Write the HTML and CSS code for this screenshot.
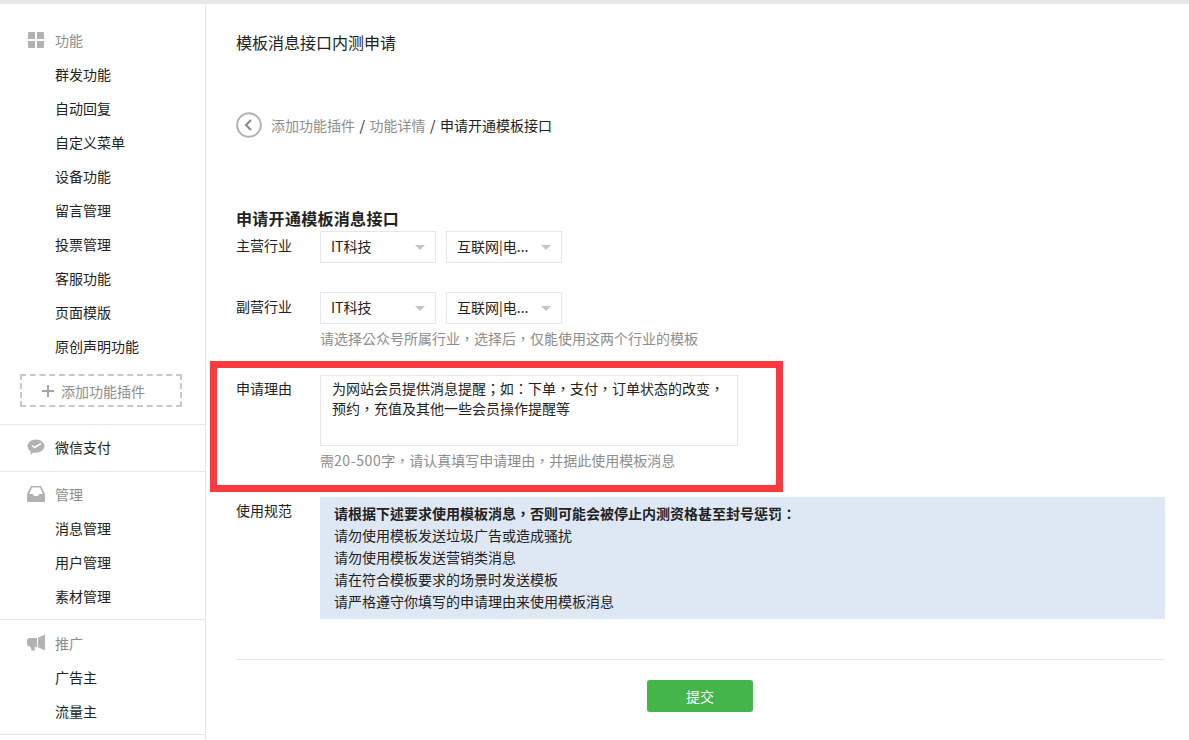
FILE: index.html
```html
<!DOCTYPE html>
<html lang="zh">
<head>
<meta charset="utf-8">
<title>模板消息接口内测申请</title>
<link rel="stylesheet" href="styles.css">
</head>
<body>
<div class="topbar"></div>
<div class="layout">
  <aside class="sidebar">
    <section class="group group-first">
      <div class="group-title">
        <svg class="gicon" viewBox="0 0 18 18"><path fill="#b2b2b2" d="M1 1h7v7H1zM10 1h7v7h-7zM1 10h7v7H1zM10 10h7v7h-7z"/></svg>
        <span>功能</span>
      </div>
      <a class="item">群发功能</a>
      <a class="item">自动回复</a>
      <a class="item">自定义菜单</a>
      <a class="item">设备功能</a>
      <a class="item">留言管理</a>
      <a class="item">投票管理</a>
      <a class="item">客服功能</a>
      <a class="item">页面模版</a>
      <a class="item">原创声明功能</a>
      <div class="add-plugin">
        <svg class="plus" viewBox="0 0 12 12"><path fill="#a3a3a3" d="M5 0h2v5h5v2H7v5H5V7H0V5h5z"/></svg>
        <span>添加功能插件</span>
      </div>
    </section>
    <section class="group group-pay">
      <div class="group-title dark">
        <svg class="gicon" viewBox="0 0 18 18"><path fill="#b2b2b2" d="M9 1.500c4.600 0 8.500 2.900 8.500 6.600S13.600 14.700 9 14.700c-.8 0-1.600-.1-2.300-.3L3.500 16.800l.2-3.500C1.700 12.100.5 10.200.5 8.100.5 4.400 4.400 1.500 9 1.500z"/><path fill="none" stroke="#fff" stroke-width="1.500" d="M5 7.500l2.500 2L14 5.500"/></svg>
        <span>微信支付</span>
      </div>
    </section>
    <section class="group">
      <div class="group-title">
        <svg class="gicon" viewBox="0 0 18 18"><path fill="#b2b2b2" d="M4 1h10l4 8v7a1 1 0 0 1-1 1H1a1 1 0 0 1-1-1V9zM5 2.500 2.200 9H6l1 2h4l1-2h3.800L13 2.500z"/></svg>
        <span>管理</span>
      </div>
      <a class="item">消息管理</a>
      <a class="item">用户管理</a>
      <a class="item">素材管理</a>
    </section>
    <section class="group group-promo">
      <div class="group-title">
        <svg class="gicon" viewBox="0 0 18 18"><path fill="#b2b2b2" d="M0 6.500C0 5 1.200 4 2.500 4H10v9H7.500l.5 3.500H4.500L3.500 12.800C1.500 12.500 0 11.500 0 9.500zM11 3.800 18 .5v16L11 13.200z"/></svg>
        <span>推广</span>
      </div>
      <a class="item">广告主</a>
      <a class="item">流量主</a>
    </section>
  </aside>
  <main class="main">
    <h1 class="page-title">模板消息接口内测申请</h1>
    <nav class="crumbs">
      <svg class="back" viewBox="0 0 26 26"><circle cx="13" cy="13" r="11.800" fill="none" stroke="#b2b2b2" stroke-width="2"/><path d="M15 8l-5 5 5 5" fill="none" stroke="#8d8d8d" stroke-width="2.200"/></svg>
      <span class="muted">添加功能插件</span><span class="sep">/</span><span class="muted">功能详情</span><span class="sep">/</span><span>申请开通模板接口</span>
    </nav>
    <h2 class="form-title">申请开通模板消息接口</h2>
    <div class="row row-industry">
      <label class="label">主营行业</label>
      <div class="field selects">
        <div class="select"><span>IT科技</span><i class="caret"></i></div>
        <div class="select"><span>互联网|电...</span><i class="caret"></i></div>
      </div>
    </div>
    <div class="row row-sub">
      <label class="label">副营行业</label>
      <div class="field">
        <div class="selects">
          <div class="select"><span>IT科技</span><i class="caret"></i></div>
          <div class="select"><span>互联网|电...</span><i class="caret"></i></div>
        </div>
        <p class="hint" lang="zh-Hant">请选择公众号所属行业，选择后，仅能使用这两个行业的模板</p>
      </div>
    </div>
    <div class="row row-reason">
      <label class="label">申请理由</label>
      <div class="field">
        <div class="textarea" lang="zh-Hant">为网站会员提供消息提醒；如：下单，支付，订单状态的改变，预约，充值及其他一些会员操作提醒等</div>
        <p class="hint" lang="zh-Hant">需<span class="num">20-500</span>字，请认真填写申请理由，并据此使用模板消息</p>
      </div>
    </div>
    <div class="row row-rules">
      <label class="label">使用规范</label>
      <div class="notice">
        <strong lang="zh-Hant">请根据下述要求使用模板消息，否则可能会被停止内测资格甚至封号惩罚：</strong>
        <p>请勿使用模板发送垃圾广告或造成骚扰</p>
        <p>请勿使用模板发送营销类消息</p>
        <p>请在符合模板要求的场景时发送模板</p>
        <p>请严格遵守你填写的申请理由来使用模板消息</p>
      </div>
    </div>
    <div class="actions"><button class="submit" type="button">提交</button></div>
  </main>
</div>
<div class="annotation"></div>
</body>
</html>
```
FILE: styles.css
```css
* { box-sizing: border-box; }
html, body { margin: 0; padding: 0; height: 740px; overflow: hidden; background: #fff; }
body {
  font-family: "Noto Sans CJK SC", "Noto Sans", sans-serif;
  font-size: 14px;
  line-height: 22px;
  color: #222;
  position: relative;
}
.topbar { height: 4px; background: #e7e7eb; }
.layout { display: flex; height: 736px; }
.sidebar { width: 206px; flex: none; border-right: 1px solid #e7e7eb; }
.group { border-bottom: 1px solid #e7e7eb; padding: 5px 0 6px; }
.group-first { padding: 19px 0 17px; }
.group-pay { padding: 5px 0 7px; }
.group-promo { padding-top: 6px; }
.group-title {
  display: flex;
  align-items: center;
  height: 34px;
  padding-left: 27px;
  gap: 10px;
  color: #8d8d8d;
}
.group-title.dark { color: #222; }
.gicon { width: 18px; height: 18px; flex: none; }
.item { display: flex; align-items: center; height: 34px; padding-left: 55px; color: #222; }
.add-plugin {
  display: flex;
  align-items: center;
  gap: 7px;
  width: 162px;
  height: 33px;
  margin: 11px 0 0 20px;
  padding-left: 20px;
  border: 2px dashed #c9c9c9;
  color: #8d8d8d;
}
.plus { width: 12px; height: 12px; flex: none; }
.main { flex: 1; min-width: 0; padding: 0 24px 0 30px; }
.page-title { margin: 0; padding-top: 27px; font-size: 16px; font-weight: 400; line-height: 22px; }
.crumbs { display: flex; align-items: center; height: 26px; margin-top: 59px; }
.back { width: 26px; height: 26px; margin-right: 9px; }
.muted { color: #8d8d8d; }
.sep { margin: 0 4.500px; }
.form-title { margin: 68px 0 1px; font-size: 16px; font-weight: 700; line-height: 24px; letter-spacing: .3px; }
.row { display: flex; }
.label { width: 84px; flex: none; line-height: 22px; color: #222; }
.field { min-width: 0; }
.selects { display: flex; gap: 10px; }
.row-sub { margin-top: 29px; }
.row-reason { margin-top: 26px; }
.row-rules { margin-top: 26px; }
.row-industry .label { padding-top: 3px; }
.row-sub .label { padding-top: 3px; }
.row-reason .label { padding-top: 2px; }
.row-rules .label { padding-top: 2px; }
.select {
  display: flex;
  align-items: center;
  justify-content: space-between;
  width: 116px;
  height: 32px;
  padding: 0 10px 2px;
  border: 1px solid #e7e7eb;
}
.caret {
  width: 0;
  height: 0;
  margin-top: 2px;
  border-left: 5px solid transparent;
  border-right: 5px solid transparent;
  border-top: 5px solid #c4c4c4;
}
.hint {
  margin: 3px 0 0;
  color: #8d8d8d;
  font-family: "Noto Sans CJK TC", "Noto Sans", sans-serif;
}
.num { letter-spacing: .6px; }
.textarea {
  width: 418px;
  height: 71px;
  padding: 2px 10px 2px 11px;
  border: 1px solid #e7e7eb;
  color: #222;
  line-height: 20px;
  font-family: "Noto Sans CJK TC", "Noto Sans", sans-serif;
}
.notice {
  flex: 1;
  height: 122px;
  padding: 5px 14px;
  background: #dee8f5;
  color: #222;
}
.notice strong { display: block; font-weight: 700; font-family: "Noto Sans CJK TC", "Noto Sans", sans-serif; }
.notice p { margin: 0; }
.actions {
  margin-top: 40px;
  padding: 20px 1px 0 0;
  border-top: 1px solid #e7e7eb;
  display: flex;
  justify-content: center;
}
.submit {
  width: 106px;
  height: 32px;
  border: 0;
  border-radius: 3px;
  background: #44b549;
  color: #fff;
  font: inherit;
  padding: 0;
}
.annotation {
  position: absolute;
  left: 210px;
  top: 361px;
  width: 573px;
  height: 131px;
  border: 7px solid #fb3a3f;
}
```
